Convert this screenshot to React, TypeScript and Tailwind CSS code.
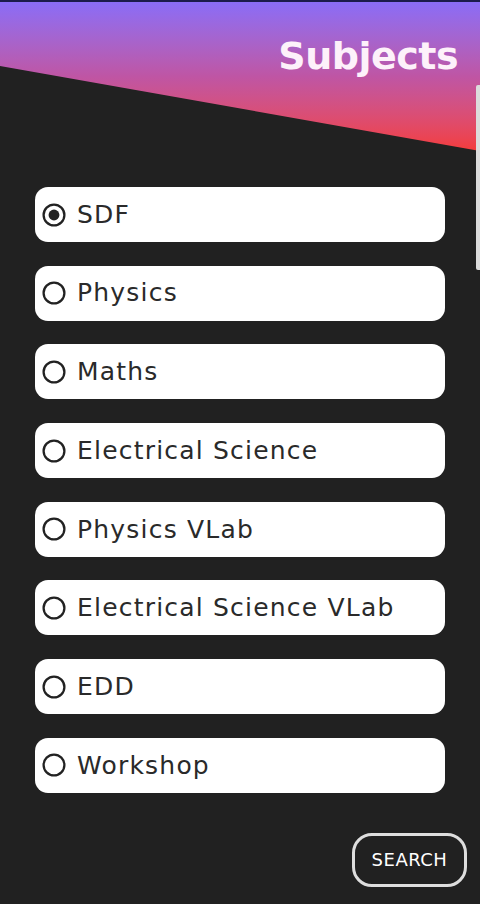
import React from "react";

const subjects = [
  "SDF",
  "Physics",
  "Maths",
  "Electrical Science",
  "Physics VLab",
  "Electrical Science VLab",
  "EDD",
  "Workshop",
];

function Radio({ checked }: { checked: boolean }) {
  return (
    <svg width="26" height="26" viewBox="0 0 24 24" className="shrink-0">
      <circle cx="12" cy="12" r="9.6" fill="none" stroke="#222" strokeWidth="2.1" />
      {checked && <circle cx="12" cy="12" r="5" fill="#222" />}
    </svg>
  );
}

export default function App() {
  return (
    <div
      className="relative w-[480px] h-[904px] overflow-hidden bg-[#212121] flex flex-col"
      style={{ fontFamily: '"DejaVu Sans", "Noto Sans", sans-serif' }}
    >
      <div className="h-[2px] bg-[#1c1b4d] shrink-0" />
      <div className="relative h-[149px] shrink-0">
        <div
          className="absolute inset-0 bg-gradient-to-b from-[#8a6cf7] via-[#bf55a4] to-[#f43b3a]"
          style={{ clipPath: "polygon(0 0, 100% 0, 100% 100%, 0 43%)" }}
        />
        <div className="relative flex justify-end pr-[22px] pt-[30px]">
          <h1 className="text-[38px] leading-[48px] font-bold text-[#fdf1fa] tracking-[-0.5px]">
            Subjects
          </h1>
        </div>
      </div>
      <div className="absolute right-0 top-[85px] w-[4px] h-[185px] bg-[#dcdcdc] rounded-l-[2px]" />

      <div className="flex flex-col gap-[23.7px] px-[35px] pt-[36px]">
        {subjects.map((s, i) => (
          <div
            key={s}
            className="h-[55px] bg-white rounded-[13px] flex items-center pl-[6px] gap-[10px]"
          >
            <Radio checked={i === 0} />
            <span className="text-[25px] text-[#2a2a2a] tracking-[1.2px]">{s}</span>
          </div>
        ))}
      </div>

      <div className="flex justify-end pr-[13px] pt-[40px]">
        <button className="w-[115px] h-[54px] border-[3px] border-[#dedede] rounded-[20px] text-white text-[18px] tracking-[0.5px]">
          SEARCH
        </button>
      </div>
    </div>
  );
}
